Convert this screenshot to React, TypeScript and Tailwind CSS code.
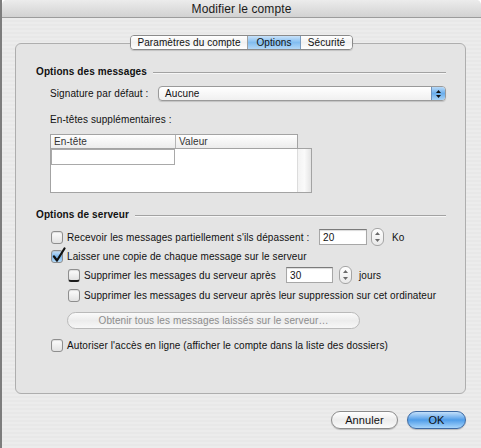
import React from 'react';

function Checkbox({ checked = false, dark = false }: { checked?: boolean; dark?: boolean }) {
  return (
    <span
      className={`relative shrink-0 w-[12px] h-[13px] rounded-[3px] border border-[#8e8e8e] shadow-[inset_0_1px_1px_rgba(0,0,0,0.12)] ${
        checked
          ? 'bg-linear-to-b from-[#cfe4f8] via-[#78b6ee] to-[#b5dbf8] border-[#5a7fa8]'
          : 'bg-linear-to-b from-[#fdfdfd] to-[#e2e2e2]'
      } ${dark ? 'border-b-[2px] border-b-[#1c1c1c]' : ''}`}
    >
      {checked && (
        <svg className="absolute left-[0px] top-[-4px]" width="14" height="16" viewBox="0 0 14 16">
          <path d="M2 9.5 L5 13.5 L12.5 1.5" fill="none" stroke="#111" strokeWidth="2.2" strokeLinecap="round" strokeLinejoin="round" />
        </svg>
      )}
    </span>
  );
}

function Stepper() {
  return (
    <span className="flex flex-col items-center justify-between shrink-0 w-[13px] h-[18px] rounded-[6px] border border-[#a5a5a5] bg-linear-to-b from-[#ffffff] to-[#e9e9e9] py-[3px]">
      <svg width="5" height="3" viewBox="0 0 5 3">
        <path d="M2.5 0 L5 3 L0 3Z" fill="#6a6a6a" />
      </svg>
      <svg width="5" height="3" viewBox="0 0 5 3">
        <path d="M0 0 L5 0 L2.5 3Z" fill="#6a6a6a" />
      </svg>
    </span>
  );
}

function SectionTitle({ label }: { label: string }) {
  return (
    <div className="flex items-center h-[16px] gap-[6px]">
      <span className="font-bold text-[10px] text-[#111] whitespace-nowrap">{label}</span>
      <span className="flex-1 h-[2px] mt-[3px] border-t border-[#a2a2a2] border-b border-b-[#f6f6f6]" />
    </div>
  );
}

export default function App() {
  return (
    <div className="flex w-[481px] h-[448px] overflow-hidden [font-family:'Liberation_Sans',Arial,sans-serif] text-[10px] tracking-[0.1px] text-[#111]">
      <div className="w-[2px] bg-[#7d7d7d]" />
      <div className="flex-1 flex flex-col rounded-t-[5px] overflow-hidden bg-[repeating-linear-gradient(0deg,#ececec_0px,#ececec_2px,#e8e8e8_2px,#e8e8e8_4px)]">
        {/* title bar */}
        <div className="h-[18px] flex items-center justify-center bg-linear-to-b from-[#ececec] to-[#d2d2d2] border-b border-[#9c9c9c]">
          <span className="text-[12px] text-[#1a1a1a]">Modifier le compte</span>
        </div>

        {/* tabs */}
        <div className="relative z-10 flex justify-center mt-[17px] h-[15px]">
          <div className="flex rounded-[4px] border border-[#8a8a8a] overflow-hidden shadow-[0_1px_1px_rgba(0,0,0,0.15)] text-[10px]">
            <div className="w-[117px] flex items-center justify-center bg-linear-to-b from-[#ffffff] via-[#f1f1f1] to-[#ffffff] border-r border-[#a0a0a0]">
              Paramètres du compte
            </div>
            <div className="w-[53px] flex items-center justify-center bg-linear-to-b from-[#c9e2f9] via-[#82bdf0] to-[#b3d8f7] border-r border-[#7a9cc0]">
              Options
            </div>
            <div className="w-[51px] flex items-center justify-center bg-linear-to-b from-[#ffffff] via-[#f1f1f1] to-[#ffffff]">
              Sécurité
            </div>
          </div>
        </div>

        {/* tab box */}
        <div className="ml-[13px] mr-[15px] -mt-[7px] h-[351px] rounded-[6px] border border-[#aeaeae] bg-[#e4e4e4] pl-[20px] pr-[19px] flex flex-col">
          <div className="mt-[19px]">
            <SectionTitle label="Options des messages" />
          </div>

          <div className="mt-[7px] flex items-center h-[15px] pl-[14px]">
            <span className="w-[108px] whitespace-nowrap">Signature par défaut :</span>
            <div className="flex-1 flex h-[15px] rounded-[4px] border border-[#9a9a9a] bg-linear-to-b from-[#ffffff] to-[#f0f0f0] overflow-hidden shadow-[0_1px_1px_rgba(0,0,0,0.15)]">
              <span className="flex-1 flex items-center pl-[6px]">Aucune</span>
              <span className="w-[14px] flex flex-col items-center justify-center gap-[2px] bg-linear-to-b from-[#b8d9f7] via-[#6aaeec] to-[#a7d2f6] border-l border-[#6e92bc]">
                <svg width="5" height="3" viewBox="0 0 5 3">
                  <path d="M2.5 0 L5 3 L0 3Z" fill="#111" />
                </svg>
                <svg width="5" height="3" viewBox="0 0 5 3">
                  <path d="M0 0 L5 0 L2.5 3Z" fill="#111" />
                </svg>
              </span>
            </div>
          </div>

          <div className="mt-[11px] h-[14px] flex items-center pl-[14px]">En-têtes supplémentaires :</div>

          {/* table */}
          <div className="mt-[8px] ml-[14px] w-[262px] flex flex-col">
            <div className="flex h-[14px] w-[248px] border border-[#a3a3a3] border-b-0 bg-linear-to-b from-[#ffffff] to-[#ececec] text-[#333]">
              <span className="w-[125px] pl-[3px] flex items-center border-r border-[#b5b5b5]">En-tête</span>
              <span className="flex-1 pl-[3px] flex items-center">Valeur</span>
            </div>
            <div className="flex h-[45px] border border-[#a3a3a3] bg-white">
              <div className="flex-1 flex flex-col">
                <div className="w-[124px] h-[16px] border border-[#a9a9a9] bg-white" />
              </div>
              <div className="w-[14px] bg-linear-to-r from-[#f3f3f3] via-[#fafafa] to-[#e4e4e4] border-l border-[#dcdcdc]" />
            </div>
          </div>

          <div className="mt-[13px]">
            <SectionTitle label="Options de serveur" />
          </div>

          <div className="mt-[6px] h-[18px] flex items-center pl-[15px]">
            <Checkbox />
            <span className="ml-[4px] w-[252px] whitespace-nowrap">Recevoir les messages partiellement s'ils dépassent :</span>
            <span className="w-[48px] h-[16px] flex items-center pl-[3px] bg-white border border-[#a7a7a7] border-t-[#7b7b7b] shadow-[inset_0_1px_1px_rgba(0,0,0,0.15)]">20</span>
            <span className="ml-[4px]"><Stepper /></span>
            <span className="ml-[8px]">Ko</span>
          </div>

          <div className="mt-[2px] h-[16px] flex items-center pl-[15px]">
            <Checkbox checked />
            <span className="ml-[4px] whitespace-nowrap">Laisser une copie de chaque message sur le serveur</span>
          </div>

          <div className="mt-[2px] h-[18px] flex items-center pl-[32px]">
            <Checkbox dark />
            <span className="ml-[4px] w-[202px] whitespace-nowrap">Supprimer les messages du serveur après</span>
            <span className="w-[47px] h-[16px] flex items-center pl-[3px] bg-white border border-[#a7a7a7] border-t-[#7b7b7b] shadow-[inset_0_1px_1px_rgba(0,0,0,0.15)]">30</span>
            <span className="ml-[6px]"><Stepper /></span>
            <span className="ml-[7px]">jours</span>
          </div>

          <div className="mt-[3px] h-[16px] flex items-center pl-[32px]">
            <Checkbox />
            <span className="ml-[4px] whitespace-nowrap">Supprimer les messages du serveur après leur suppression sur cet ordinateur</span>
          </div>

          <div className="mt-[9px] pl-[31px]">
            <div className="w-[293px] h-[17px] rounded-full border border-[#b9b9b9] bg-linear-to-b from-[#fafafa] via-[#ececec] to-[#f7f7f7] flex items-center justify-center text-[#8d8d8d]">
              Obtenir tous les messages laissés sur le serveur…
            </div>
          </div>

          <div className="mt-[8px] h-[16px] flex items-center pl-[15px]">
            <Checkbox />
            <span className="ml-[4px] whitespace-nowrap">Autoriser l'accès en ligne (afficher le compte dans la liste des dossiers)</span>
          </div>
        </div>

        {/* buttons */}
        <div className="mt-[17px] flex justify-end gap-[9px] mr-[15px]">
          <div className="w-[67px] h-[18px] rounded-full border border-[#8c8c8c] bg-linear-to-b from-[#ffffff] via-[#ececec] to-[#fafafa] shadow-[0_1px_1px_rgba(0,0,0,0.2)] flex items-center justify-center text-[11px]">
            Annuler
          </div>
          <div className="w-[59px] h-[18px] rounded-full border border-[#3e6aa3] bg-linear-to-b from-[#c3e0fa] via-[#4f9de8] to-[#a6d5fb] shadow-[0_1px_1px_rgba(0,0,0,0.2)] flex items-center justify-center text-[11px]">
            OK
          </div>
        </div>
      </div>
    </div>
  );
}
